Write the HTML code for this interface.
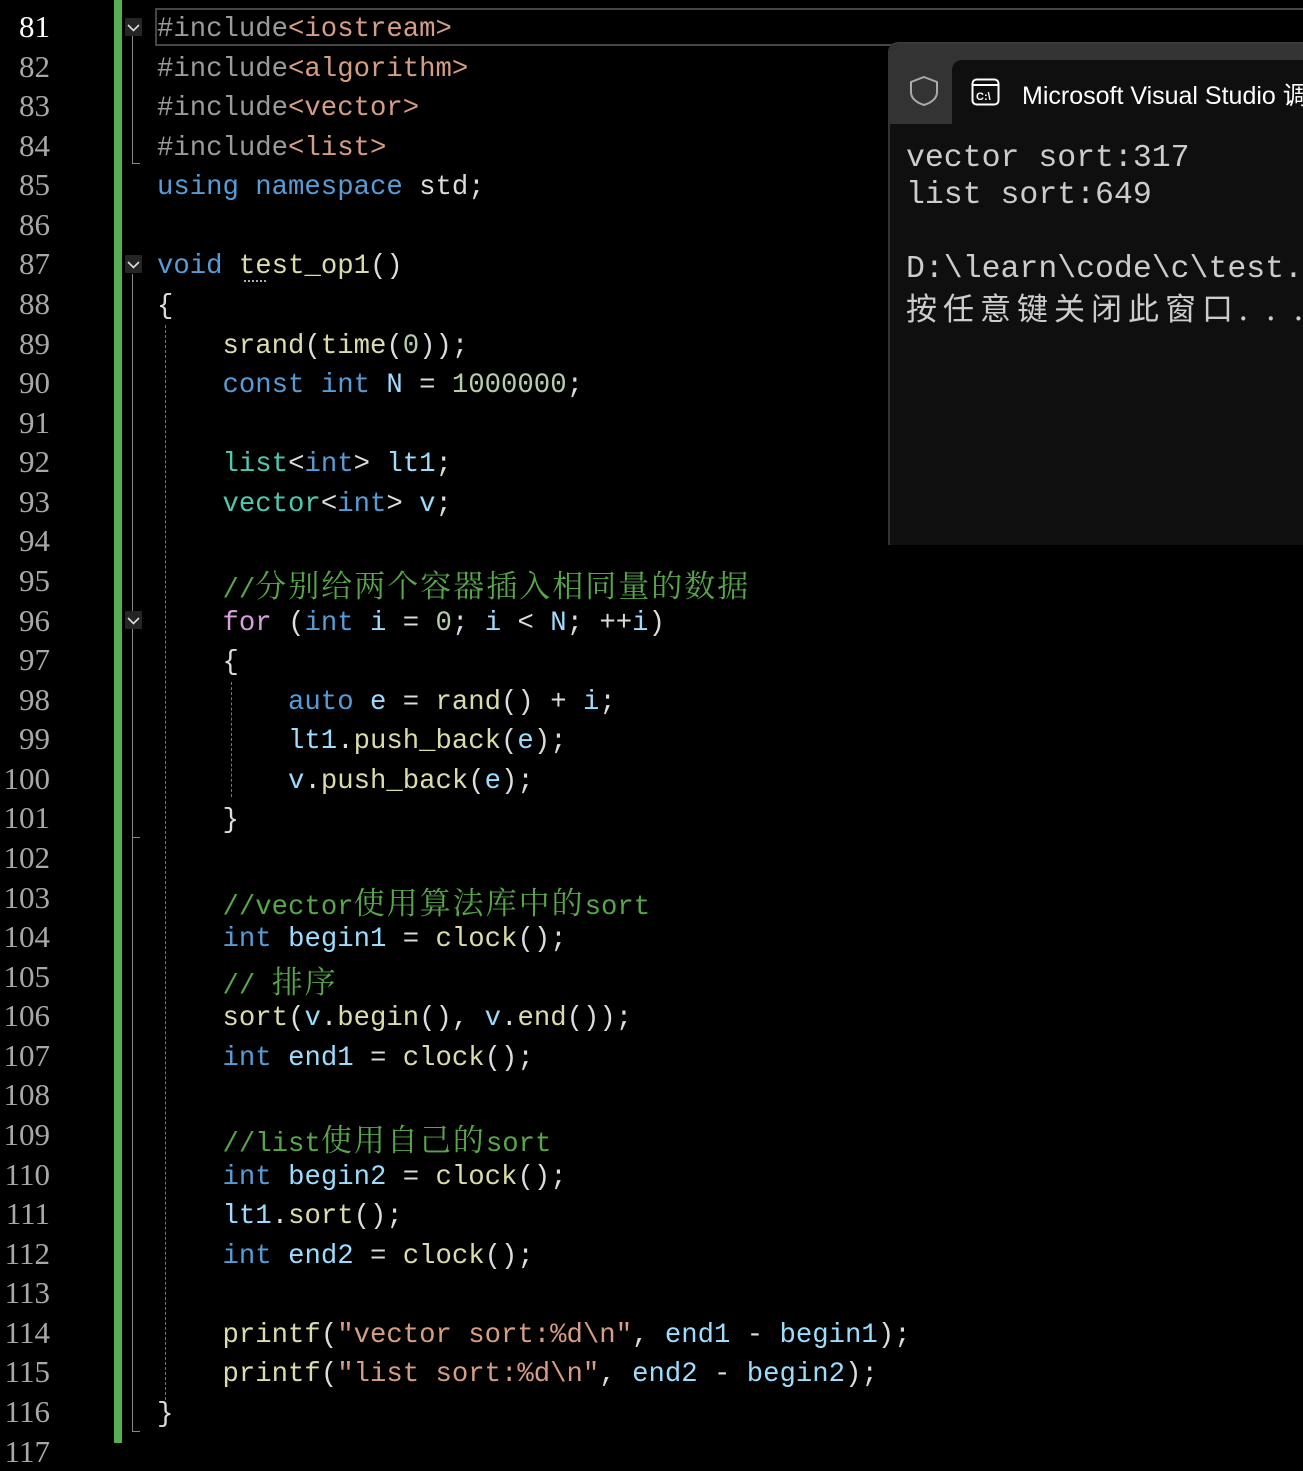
<!DOCTYPE html>
<html><head><meta charset="utf-8"><style>
body{margin:0;background:#000;width:1303px;height:1443px;overflow:hidden;position:relative;font-family:"Liberation Mono",monospace}
.ln{position:absolute;left:0;width:50px;text-align:right;font-family:"Liberation Serif","Noto Serif CJK SC",serif;font-size:31px;color:#a8a8a8;height:39.57px;line-height:39.57px}
.cl{position:absolute;left:157px;font-size:27.3px;color:#dcdcdc;white-space:pre;height:39.57px;line-height:39.57px;margin-top:3px}
.k{color:#569cd6}.t{color:#4ec9b0}.f{color:#dcdcaa}.v{color:#9cdcfe}.s{color:#d69d85}.c{color:#57a64a}.p{color:#9b9b9b}.n{color:#b5cea8}.fl{color:#d8a0df}
.cj{font-family:"Noto Serif CJK SC","Noto Sans CJK SC",serif;font-size:31px;letter-spacing:2px}
.fold{position:absolute;left:125px;width:17px;height:18px;background:#252526}
.fold svg{display:block}
</style></head><body>
<div style="position:absolute;left:114px;top:0;width:8px;height:1443px;background:#57ad4f"></div>
<div style="position:absolute;left:155px;top:8px;width:1160px;height:34px;border:2px solid #464646"></div>
<div style="position:absolute;left:132px;top:36px;width:1px;height:128px;background:#888"></div>
<div style="position:absolute;left:132px;top:163px;width:8px;height:1px;background:#888"></div>
<div style="position:absolute;left:132px;top:274px;width:1px;height:1158px;background:#888"></div>
<div style="position:absolute;left:132px;top:837px;width:8px;height:1px;background:#888"></div>
<div style="position:absolute;left:132px;top:1431px;width:8px;height:1px;background:#888"></div>
<div class="fold" style="top:18px"><svg width="17" height="18"><path d="M3 7l5.5 5.5 5.5-5.5" stroke="#ddd" stroke-width="1.6" fill="none"/></svg></div>
<div class="fold" style="top:255px"><svg width="17" height="18"><path d="M3 7l5.5 5.5 5.5-5.5" stroke="#ddd" stroke-width="1.6" fill="none"/></svg></div>
<div class="fold" style="top:611px"><svg width="17" height="18"><path d="M3 7l5.5 5.5 5.5-5.5" stroke="#ddd" stroke-width="1.6" fill="none"/></svg></div>
<div style="position:absolute;left:165px;top:325px;width:0;height:1075px;border-left:1px dashed #777"></div>
<div style="position:absolute;left:231px;top:682px;width:0;height:115px;border-left:1px dashed #777"></div>
<div style="position:absolute;left:244px;top:280px;width:22px;border-top:2px dotted #aaa"></div>

<div class="ln" style="top:7px;color:#fff">81</div>
<div class="ln" style="top:46.6px">82</div>
<div class="ln" style="top:86.1px">83</div>
<div class="ln" style="top:125.7px">84</div>
<div class="ln" style="top:165.3px">85</div>
<div class="ln" style="top:204.9px">86</div>
<div class="ln" style="top:244.4px">87</div>
<div class="ln" style="top:284px">88</div>
<div class="ln" style="top:323.6px">89</div>
<div class="ln" style="top:363.1px">90</div>
<div class="ln" style="top:402.7px">91</div>
<div class="ln" style="top:442.3px">92</div>
<div class="ln" style="top:481.8px">93</div>
<div class="ln" style="top:521.4px">94</div>
<div class="ln" style="top:561px">95</div>
<div class="ln" style="top:600.6px">96</div>
<div class="ln" style="top:640.1px">97</div>
<div class="ln" style="top:679.7px">98</div>
<div class="ln" style="top:719.3px">99</div>
<div class="ln" style="top:758.8px">100</div>
<div class="ln" style="top:798.4px">101</div>
<div class="ln" style="top:838px">102</div>
<div class="ln" style="top:877.5px">103</div>
<div class="ln" style="top:917.1px">104</div>
<div class="ln" style="top:956.7px">105</div>
<div class="ln" style="top:996.3px">106</div>
<div class="ln" style="top:1035.8px">107</div>
<div class="ln" style="top:1075.4px">108</div>
<div class="ln" style="top:1115px">109</div>
<div class="ln" style="top:1154.5px">110</div>
<div class="ln" style="top:1194.1px">111</div>
<div class="ln" style="top:1233.7px">112</div>
<div class="ln" style="top:1273.2px">113</div>
<div class="ln" style="top:1312.8px">114</div>
<div class="ln" style="top:1352.4px">115</div>
<div class="ln" style="top:1392px">116</div>
<div class="ln" style="top:1431.5px">117</div>

<div class="cl" style="top:7px"><span class="p">#include</span><span class="s">&lt;iostream&gt;</span></div>
<div class="cl" style="top:46.6px"><span class="p">#include</span><span class="s">&lt;algorithm&gt;</span></div>
<div class="cl" style="top:86.1px"><span class="p">#include</span><span class="s">&lt;vector&gt;</span></div>
<div class="cl" style="top:125.7px"><span class="p">#include</span><span class="s">&lt;list&gt;</span></div>
<div class="cl" style="top:165.3px"><span class="k">using namespace</span> std;</div>
<div class="cl" style="top:244.4px"><span class="k">void</span> <span class="f">test_op1</span>()</div>
<div class="cl" style="top:284px">{</div>
<div class="cl" style="top:323.6px">    <span class="f">srand</span>(<span class="f">time</span>(<span class="n">0</span>));</div>
<div class="cl" style="top:363.1px">    <span class="k">const int</span> <span class="v">N</span> = <span class="n">1000000</span>;</div>
<div class="cl" style="top:442.3px">    <span class="t">list</span>&lt;<span class="k">int</span>&gt; <span class="v">lt1</span>;</div>
<div class="cl" style="top:481.8px">    <span class="t">vector</span>&lt;<span class="k">int</span>&gt; <span class="v">v</span>;</div>
<div class="cl" style="top:561px">    <span class="c">//<span class="cj">分别给两个容器插入相同量的数据</span></span></div>
<div class="cl" style="top:600.6px">    <span class="fl">for</span> (<span class="k">int</span> <span class="v">i</span> = <span class="n">0</span>; <span class="v">i</span> &lt; <span class="v">N</span>; ++<span class="v">i</span>)</div>
<div class="cl" style="top:640.1px">    {</div>
<div class="cl" style="top:679.7px">        <span class="k">auto</span> <span class="v">e</span> = <span class="f">rand</span>() + <span class="v">i</span>;</div>
<div class="cl" style="top:719.3px">        <span class="v">lt1</span>.<span class="f">push_back</span>(<span class="v">e</span>);</div>
<div class="cl" style="top:758.8px">        <span class="v">v</span>.<span class="f">push_back</span>(<span class="v">e</span>);</div>
<div class="cl" style="top:798.4px">    }</div>
<div class="cl" style="top:877.5px">    <span class="c">//vector<span class="cj">使用算法库中的</span>sort</span></div>
<div class="cl" style="top:917.1px">    <span class="k">int</span> <span class="v">begin1</span> = <span class="f">clock</span>();</div>
<div class="cl" style="top:956.7px">    <span class="c">// <span class="cj">排序</span></span></div>
<div class="cl" style="top:996.3px">    <span class="f">sort</span>(<span class="v">v</span>.<span class="f">begin</span>(), <span class="v">v</span>.<span class="f">end</span>());</div>
<div class="cl" style="top:1035.8px">    <span class="k">int</span> <span class="v">end1</span> = <span class="f">clock</span>();</div>
<div class="cl" style="top:1115px">    <span class="c">//list<span class="cj">使用自己的</span>sort</span></div>
<div class="cl" style="top:1154.5px">    <span class="k">int</span> <span class="v">begin2</span> = <span class="f">clock</span>();</div>
<div class="cl" style="top:1194.1px">    <span class="v">lt1</span>.<span class="f">sort</span>();</div>
<div class="cl" style="top:1233.7px">    <span class="k">int</span> <span class="v">end2</span> = <span class="f">clock</span>();</div>
<div class="cl" style="top:1312.8px">    <span class="f">printf</span>(<span class="s">"vector sort:%d\n"</span>, <span class="v">end1</span> - <span class="v">begin1</span>);</div>
<div class="cl" style="top:1352.4px">    <span class="f">printf</span>(<span class="s">"list sort:%d\n"</span>, <span class="v">end2</span> - <span class="v">begin2</span>);</div>
<div class="cl" style="top:1392px">}</div>

<div style="position:absolute;left:888px;top:42px;width:430px;height:501px;background:#0f0f0f;border-left:2px solid #333;border-top:2px solid #3a3a3a;border-top-left-radius:10px;overflow:hidden">
  <div style="position:absolute;left:0;top:0;width:100%;height:80px;background:#333"></div>
  <div style="position:absolute;left:62px;top:16px;width:400px;height:66px;background:#0f0f0f;border-top-left-radius:10px"></div>
  <svg style="position:absolute;left:18px;top:30px" width="32" height="34" viewBox="0 0 32 34"><path d="M16 3 L29 8 V18 C29 25 22 29 16 31 C10 29 3 25 3 18 V8 Z" fill="none" stroke="#aaa" stroke-width="2"/></svg>
  <svg style="position:absolute;left:81px;top:34px" width="30" height="28" viewBox="0 0 30 28"><rect x="1.5" y="1.5" width="26" height="25" rx="4" fill="none" stroke="#fff" stroke-width="2"/><line x1="1.5" y1="7" x2="27.5" y2="7" stroke="#fff" stroke-width="2"/><text x="5" y="22" font-family="Liberation Sans" font-size="11" font-weight="bold" fill="#fff">C:\</text></svg>
  <div style="position:absolute;left:132px;top:32px;font-family:'Liberation Sans','Noto Sans CJK SC',sans-serif;font-size:25px;color:#fff;white-space:nowrap">Microsoft Visual Studio 调</div>
  <div style="position:absolute;left:16px;top:96px;font-family:'Liberation Mono','Noto Sans CJK SC',monospace;font-size:31.5px;line-height:37px;color:#cccccc;white-space:pre">vector sort:317
list sort:649

D:\learn\code\c\test.
<span style="font-family:'Noto Sans CJK SC',sans-serif;letter-spacing:6px;font-size:31px">按任意键关闭此窗口. . .</span></div>
</div>
</body></html>
